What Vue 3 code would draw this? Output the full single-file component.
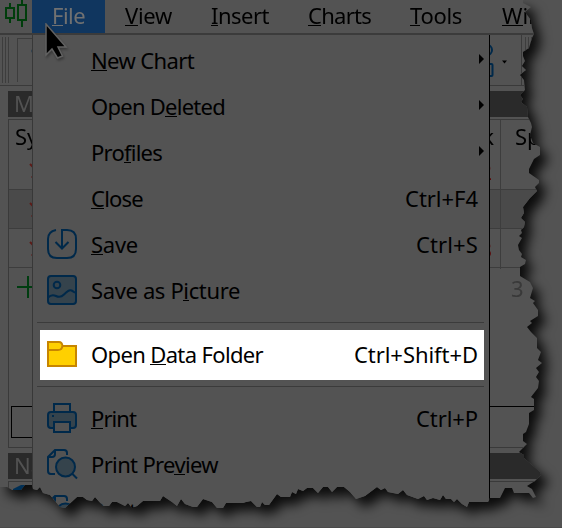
<script setup>
const menus = [
  { key: 'F', post: 'ile', cls: 'file', w: 33 },
  { key: 'V', post: 'iew', cls: 'view', w: 47 },
  { key: 'I', post: 'nsert', cls: 'insert', w: 58 },
  { key: 'C', post: 'harts', cls: 'charts', w: 63 },
  { key: 'T', post: 'ools', cls: 'tools', w: 52 },
  { key: 'W', post: 'in', cls: 'window', w: 40 },
]
const items = [
  { pre: '', key: 'N', post: 'ew Chart', sub: true, w: 103 },
  { pre: 'Open D', key: 'e', post: 'leted', sub: true, w: 134 },
  { pre: 'Pro', key: 'f', post: 'iles', sub: true, w: 71 },
  { pre: '', key: 'C', post: 'lose', short: 'Ctrl+F4', w: 52, sw: 73 },
  { pre: '', key: 'S', post: 'ave', short: 'Ctrl+S', icon: 'save', w: 47, sw: 62 },
  { pre: 'Save as P', key: 'i', post: 'cture', icon: 'picture', w: 149 },
  { sep: true },
  { pre: 'Open ', key: 'D', post: 'ata Folder', short: 'Ctrl+Shift+D', icon: 'folder', hot: true, w: 172, sw: 124 },
  { sep: true },
  { pre: '', key: 'P', post: 'rint', short: 'Ctrl+P', icon: 'printer', w: 45, sw: 62 },
  { pre: 'Print Pre', key: 'v', post: 'iew', icon: 'preview', w: 127 },
  { pre: 'Print ', key: 'S', post: 'etup...', icon: 'setup', w: 120 },
]
const rows = ['2', '1', '3']
const edge = [
  0,0, 523,0, 523,3, 531,7, 525,12, 531,20, 532,28, 534,34, 532,38, 529,48, 523,52, 523,56, 525,61, 522,66, 526,70,
  520,75, 524,80, 525,90, 520,95, 523,99, 521,102, 527,107, 528,117, 531,123, 532,127, 530,135, 533,143, 540,147,
  540,155, 534,159, 529,169, 529,173, 539,180, 539,183, 535,187, 537,191, 530,198, 523,207, 524,213, 521,218,
  525,222, 524,227, 521,230, 522,233, 519,236, 522,238, 518,245, 519,250, 522,254, 521,257, 526,260, 525,264,
  520,267, 520,276, 530,282, 533,288, 530,298, 535,301, 533,303, 538,310, 538,316, 530,321, 532,323, 527,327,
  531,332, 537,338, 537,348, 541,352, 538,360, 542,363, 536,368, 539,372, 536,377, 539,381, 538,388, 531,397,
  534,399, 534,410, 529,413, 529,424, 526,432, 523,434, 523,441, 527,444, 519,452, 524,455, 524,458, 532,465,
  540,472, 541,475, 535,481, 527,486, 532,489, 536,497, 533,498, 529,493, 514,493, 512,488, 505,488, 500,498,
  490,498, 488,502, 469,502, 467,507, 462,504, 457,499, 454,502, 451,499, 446,499, 443,495, 440,500, 433,498,
  427,500, 424,496, 418,499, 407,495, 403,490, 398,494, 388,492, 385,488, 381,490, 377,487, 365,496, 356,499,
  350,492, 344,487, 337,487, 332,492, 328,487, 323,487, 318,493, 313,488, 307,488, 303,491, 298,489, 296,494,
  292,492, 290,497, 281,497, 277,494, 269,505, 265,505, 262,502, 260,507, 257,507, 251,501, 246,502, 243,503,
  226,503, 223,508, 217,508, 212,502, 203,499, 197,507, 193,507, 185,504, 181,499, 177,506, 172,502, 163,496,
  160,501, 143,501, 137,506, 132,508, 128,503, 125,506, 117,502, 112,502, 109,506, 103,506, 95,497, 92,501,
  87,500, 83,497, 77,497, 65,508, 60,507, 50,495, 43,493, 40,487, 37,490, 33,489, 32,485, 25,485, 21,490,
  12,490, 7,487, 0,487,
]
const pts = []
for (let i = 0; i < edge.length; i += 2) pts.push(`${edge[i]}px ${edge[i + 1]}px`)
const clip = `polygon(${pts.join(',')})`

// Fits each label to its measured width by spreading letter spacing.
const vFit = {
  mounted(el, { value }) {
    if (!value) return
    const n = el.textContent.length
    const w = el.getBoundingClientRect().width
    el.style.letterSpacing = (value - w) / n + 'px'
  },
}
</script>

<template>
  <div class="stage">
    <div class="shadow">
      <div class="window-area" :style="{ clipPath: clip }">
        <nav class="menubar">
          <span class="logo">
            <svg width="32" height="33" viewBox="0 0 32 33" fill="none" stroke="#003d0b" stroke-width="2">
              <path d="M10 3v5M10 18v5M6 8h8v10H6zM22 0v5M22 20v7M18 5h8v15h-8z" />
            </svg>
          </span>
          <span v-for="m in menus" :key="m.cls" class="menu" :class="m.cls"><span v-fit="m.w" class="label"><u>{{ m.key }}</u>{{ m.post }}</span></span>
        </nav>
        <div class="toolbar">
          <span class="grip"><i /><i /><i /></span>
          <span class="tool">
            <svg width="15" height="43" viewBox="0 0 15 43"><path d="M15 9q-3 3 0 6z" fill="#002b4a" /></svg>
          </span>
          <span class="tool-end">
            <svg width="31" height="50" viewBox="0 0 31 50" fill="none" stroke="#00294a" stroke-width="2">
              <path d="M-3 10a5 5 0 0 1 5 5 5 5 0 0 1-5 5M-4 29H1.500q1 0 1 1v10q0 1-1 1H-4" />
              <path d="M12 25.500h5l-2.500 3z" fill="#000" stroke="none" />
            </svg>
          </span>
          <span class="grip end"><i /><i /><i /></span>
        </div>
        <div class="title">M</div>
        <div class="table">
          <div class="thead"><span>Sy</span><span class="right">k</span><span class="spread">Sp</span></div>
          <div v-for="r in rows" :key="r" class="trow">
            <svg class="arrow" width="24" height="38" viewBox="0 0 24 38" fill="none" stroke="#5c1b18" stroke-width="2">
              <path d="M13 13l13 13M14.500 26H26" />
            </svg>
            <span class="right red">{{ r }}</span><span class="spread" />
          </div>
          <div class="add">
            <svg width="24" height="38" viewBox="0 0 24 38" stroke="#003d10" stroke-width="2"><path d="M8 19h22M19 8v22" /></svg>
            <span class="count">3</span>
          </div>
          <div class="tabs"><span class="tab" /><span class="strip" /></div>
        </div>
        <div class="title nav">Na</div>
        <div class="tree">
          <svg width="24" height="24" viewBox="0 0 24 24"><path d="M4 7l8-4 5 0-8 8-5-2z" fill="#002f55" /></svg>
        </div>

        <div class="popup">
          <template v-for="(it, i) in items" :key="i">
            <hr v-if="it.sep">
            <div v-else class="item" :class="{ hot: it.hot }">
              <span class="icon">
                <svg v-if="it.icon" width="32" height="32" viewBox="0 0 32 32" fill="none" stroke="#00294a" stroke-width="2">
                  <template v-if="it.icon === 'save'">
                    <path d="M10 2C4.500 3 2 6 2 11v10q0 9 9 9h10q9 0 9-9V11q0-9-9-9h-5v18M9.500 14l6.500 6.500 6.500-6.500" />
                  </template>
                  <template v-else-if="it.icon === 'picture'">
                    <rect x="2" y="2" width="28" height="28" rx="3" fill="#35434c" />
                    <circle cx="11" cy="11" r="3.300" />
                    <path d="M2 23.500c3-3 5-3 8-1.500 3 1.500 5 1.500 8-1.500s5-5 7.500-4 2 2 4.500 2" />
                  </template>
                  <template v-else-if="it.icon === 'folder'">
                    <path d="M2 3h11q3 0 3.500 4H30v20H2z" fill="#ffd000" stroke="#c78500" />
                    <path d="M2 11h10q4 0 4.500-4" stroke="#c78500" />
                  </template>
                  <template v-else-if="it.icon === 'printer'">
                    <path d="M8 10V2h16v8" />
                    <path d="M8 26H5q-3 0-3-3V13q0-3 3-3h22q3 0 3 3v10q0 3-3 3h-3v-6H8z" fill="#35434c" />
                    <path d="M8 20h16v10H8z" />
                    <path d="M6 14h2" />
                  </template>
                  <template v-else>
                    <path d="M9 26H5q-3 0-3-3V9l7-7h9q3 0 3 3v2M9 2v4q0 3-3 3H2" />
                    <circle cx="19.500" cy="19" r="9.500" fill="#35434c" />
                    <path d="M26 25.500l5 5" />
                  </template>
                </svg>
              </span>
              <span class="caption"><span v-fit="it.w" class="label">{{ it.pre }}<u>{{ it.key }}</u>{{ it.post }}</span></span>
              <span v-if="it.short" class="short"><span v-fit="it.sw" class="label">{{ it.short }}</span></span>
              <i v-if="it.sub" class="sub" />
            </div>
          </template>
        </div>

        <svg class="cursor" width="28" height="46" viewBox="0 0 28 46">
          <path d="M2 1v31l6-6 5.500 9 5-2-4.500-9h8z" fill="#000" stroke="#616161" stroke-width="1.500" />
        </svg>
      </div>
    </div>
  </div>
</template>

<style>
body { background: #535353; }
</style>

<style scoped>
.stage {
  position: relative;
  width: 562px;
  height: 528px;
  overflow: hidden;
  box-sizing: border-box;
  border-bottom: 1px solid #4a4a4a;
  background: #535353;
  font: 22px/28px "Noto Sans", "Open Sans", sans-serif;
  color: #000;
}
.shadow { filter: drop-shadow(7px 8px 6px rgba(0, 0, 0, .86)); }
.window-area {
  position: relative;
  display: flex;
  flex-direction: column;
  width: 562px;
  height: 528px;
  overflow: hidden;
  background: #535353;
}
.label { display: inline-block; white-space: pre; }
u {
  text-decoration: none;
  background: linear-gradient(currentColor, currentColor) 0 calc(100% - 4px) / 100% 1px no-repeat;
}
.menubar { display: flex; flex: none; height: 35px; box-sizing: border-box; border-bottom: 2px solid #3b3b3b; }
.logo { flex: none; width: 32px; height: 33px; }
.menu { flex: none; height: 33px; line-height: 31px; white-space: nowrap; }
.menu.file { width: 53px; padding-left: 20px; background: #10365f; color: #717171; }
.menu.view { width: 86px; padding-left: 20px; }
.menu.insert { width: 97px; }
.menu.charts { width: 102px; }
.menu.tools { width: 92px; }
.toolbar { display: flex; height: 50px; flex: none; border-bottom: 1px solid #3a3a3a; }
.grip { display: flex; flex: none; gap: 2px; padding: 2px 0 2px 2px; width: 15px; box-sizing: border-box; }
.grip i { width: 1px; background: #3d3d3d; }
.tool { flex: none; width: 15px; height: 43px; margin: 3px 0 0 2px; border: solid #3d3d3d; border-width: 1px 0 0 1px; }
.tool-end { flex: none; width: 31px; margin-left: 457px; border-right: 1px solid #3a3a3a; }
.grip.end { padding-left: 3px; }
.title {
  flex: none;
  height: 26px;
  margin: 5px 0 2px 8px;
  padding-left: 6px;
  line-height: 25px;
  background: #2a2a2a;
  color: #525252;
}
.table { flex: none; height: 329px; margin-left: 8px; border: solid #3a3a3a; border-width: 1px 0 1px 1px; box-sizing: border-box; }
.thead, .trow { display: grid; grid-template-columns: 400px 91px 60px; }
.thead { height: 31px; line-height: 32px; padding-left: 6px; grid-template-columns: 400px 85px 60px; }
.thead .spread { padding-left: 14px; }
.spread { border-left: 1px solid #3d3d3d; }
.trow { height: 39px; box-sizing: border-box; border-bottom: 1px solid #3d3d3d; line-height: 40px; }
.trow:nth-child(3) { background: #4a4a4a; }
.arrow { margin-left: 8px; }
.right { text-align: right; padding-right: 6px; }
.red { color: #5c0000; padding-right: 8px; }
.add { display: flex; height: 40px; line-height: 40px; color: #393939; }
.count { margin-left: 478px; }
.tabs { display: flex; height: 32px; margin-top: 98px; }
.tab { box-sizing: border-box; width: 300px; margin-left: 2px; border: solid #000; border-width: 1px 0 1px 1px; }
.strip { flex: 1; border-top: 1px solid #000; }
.title.nav { margin-top: 5px; margin-bottom: 2px; line-height: 24px; }
.tree { height: 50px; flex: none; margin-left: 8px; border: solid #3a3a3a; border-width: 1px 0 0 1px; }
.popup {
  position: absolute;
  left: 32px;
  top: 35px;
  width: 458px;
  height: 493px;
  padding: 2px 5px 0 4px;
  box-sizing: border-box;
  border-left: 1px solid #383838;
  border-right: 1px solid #000;
  background: #535353;
}
.item { display: flex; align-items: center; height: 46px; padding: 0 6px 0 9px; }
.item.hot { height: 50px; margin-left: 3px; padding-left: 6px; background: #fff; }
.icon { display: flex; width: 32px; height: 32px; }
.caption { padding-left: 13px; flex: 1; white-space: nowrap; }
.short { white-space: nowrap; }
.hot .caption, .hot .short { padding-bottom: 2px; }
.sub { width: 0; height: 0; border: 5px solid transparent; border-left-color: #000; border-right: 0; margin: -3px -6px 0 0; }
hr { height: 1px; border: 0; margin: 9px 0 7px; background: #3b3b3b; }
.hot + hr { margin: 6px 0 8px; }
.cursor { position: absolute; left: 44px; top: 23px; filter: drop-shadow(1px 2px 1px rgba(0, 0, 0, .3)); }
</style>
